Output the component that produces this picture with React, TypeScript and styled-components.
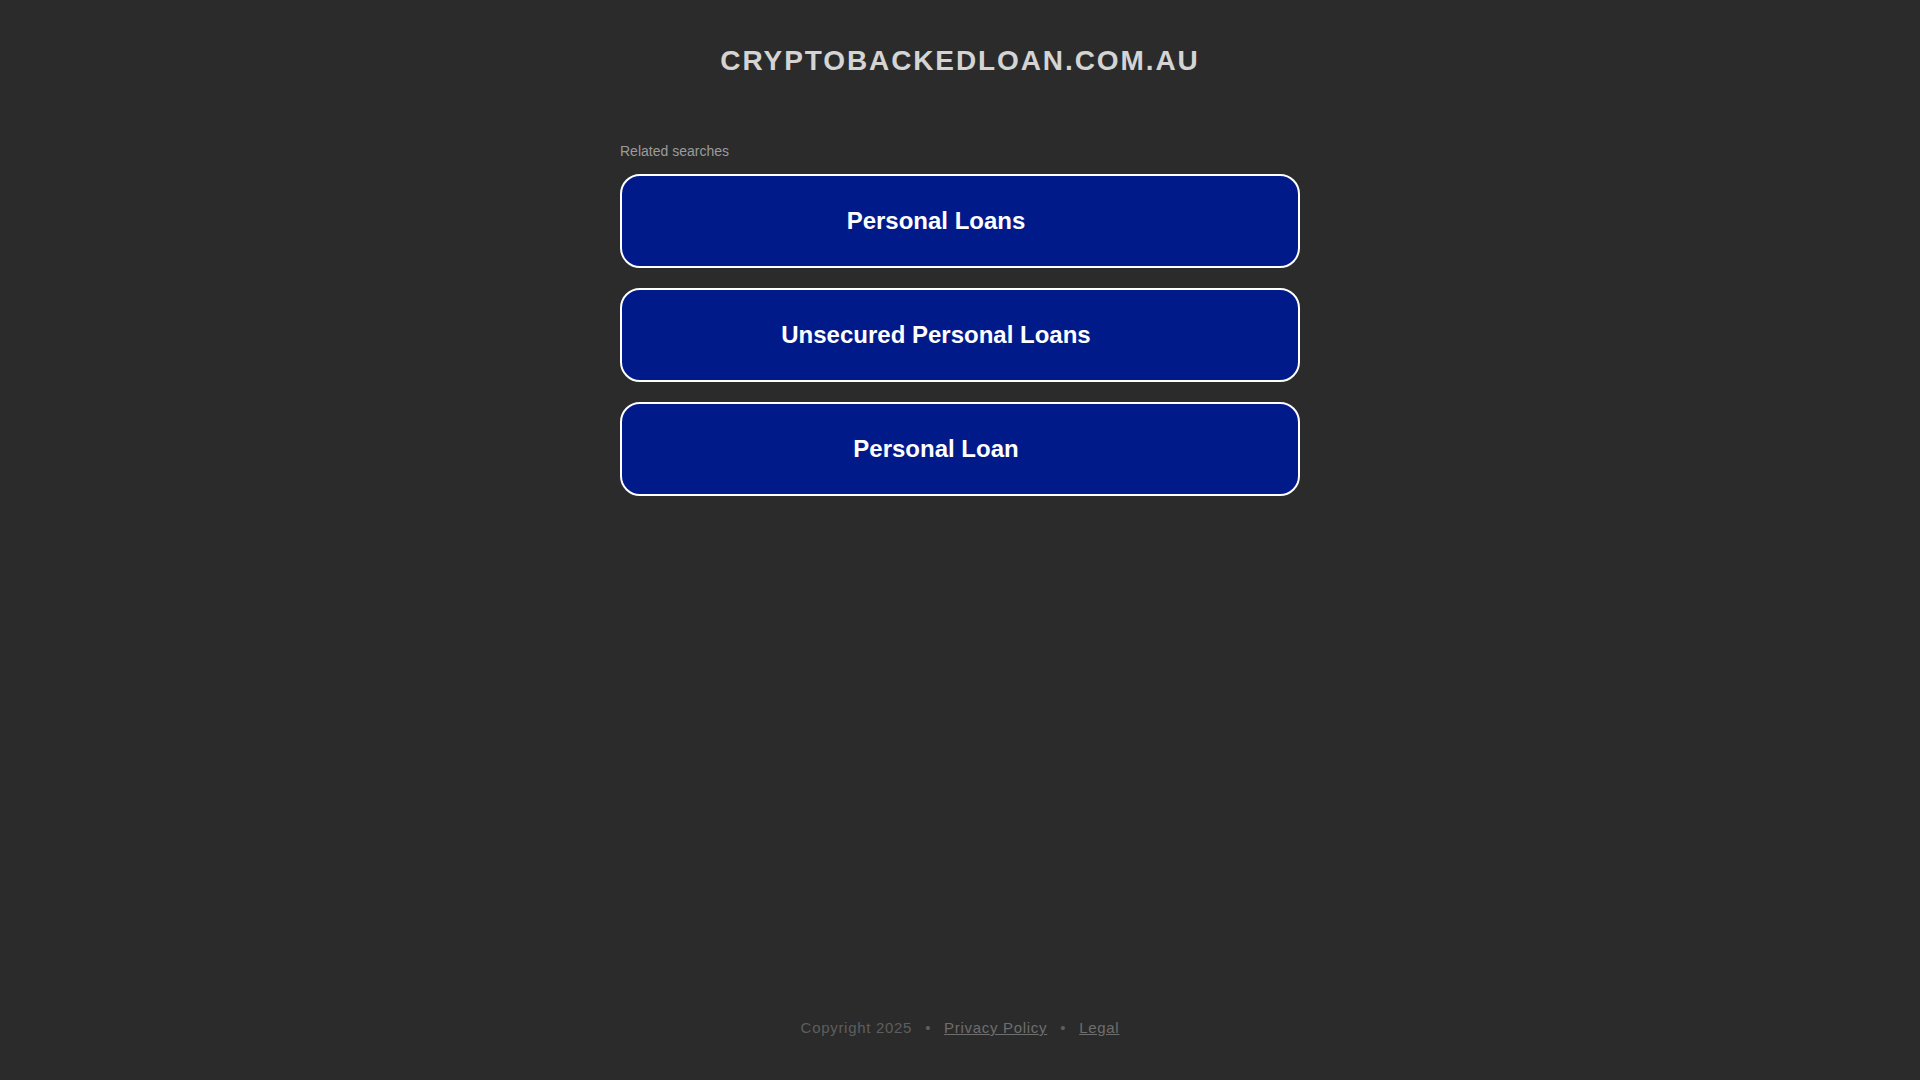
import styled, { createGlobalStyle } from 'styled-components';

const GlobalStyle = createGlobalStyle`
    html, body {
        margin: 0;
        padding: 0;
        background-color: #2b2b2b;
        font-family: "Liberation Sans", Arial, sans-serif;
    }
`;

const Page = styled.div`
    min-height: 100vh;
    display: flex;
    flex-direction: column;
    align-items: center;
`;

const Domain = styled.h1`
    margin: 43px 0 0;
    font-size: 28px;
    line-height: 36px;
    font-weight: bold;
    letter-spacing: 1.9px;
    color: #d4d4d4;
`;

const Searches = styled.section`
    width: 680px;
    margin-top: 63px;
    display: flex;
    flex-direction: column;
`;

const Caption = styled.div`
    font-size: 14px;
    line-height: 18px;
    color: #9b9b9b;
    margin-bottom: 14px;
`;

const SearchLink = styled.a`
    box-sizing: border-box;
    height: 94px;
    margin-bottom: 20px;
    padding: 0 48px 0 0;
    display: flex;
    align-items: center;
    justify-content: center;
    background-color: #011a8a;
    border: 2px solid #ffffff;
    border-radius: 20px;
    color: #ffffff;
    font-size: 24px;
    font-weight: bold;
    text-decoration: none;
`;

const Footer = styled.footer`
    margin-top: auto;
    padding-bottom: 44px;
    display: flex;
    align-items: center;
    gap: 13px;
    font-size: 15px;
    letter-spacing: 0.7px;
    color: #5e5e5e;
`;

const FooterLink = styled.a`
    color: #6e6e6e;
    text-decoration: underline;
`;

const searches = ['Personal Loans', 'Unsecured Personal Loans', 'Personal Loan'];

const App: React.FC = () => {
    return (
        <>
            <GlobalStyle />
            <Page>
                <Domain>CRYPTOBACKEDLOAN.COM.AU</Domain>
                <Searches>
                    <Caption>Related searches</Caption>
                    {searches.map((s) => (
                        <SearchLink key={s} href="#">
                            {s}
                        </SearchLink>
                    ))}
                </Searches>
                <Footer>
                    <span>Copyright 2025</span>
                    <span>•</span>
                    <FooterLink href="#">Privacy Policy</FooterLink>
                    <span>•</span>
                    <FooterLink href="#">Legal</FooterLink>
                </Footer>
            </Page>
        </>
    );
};

export default App;
